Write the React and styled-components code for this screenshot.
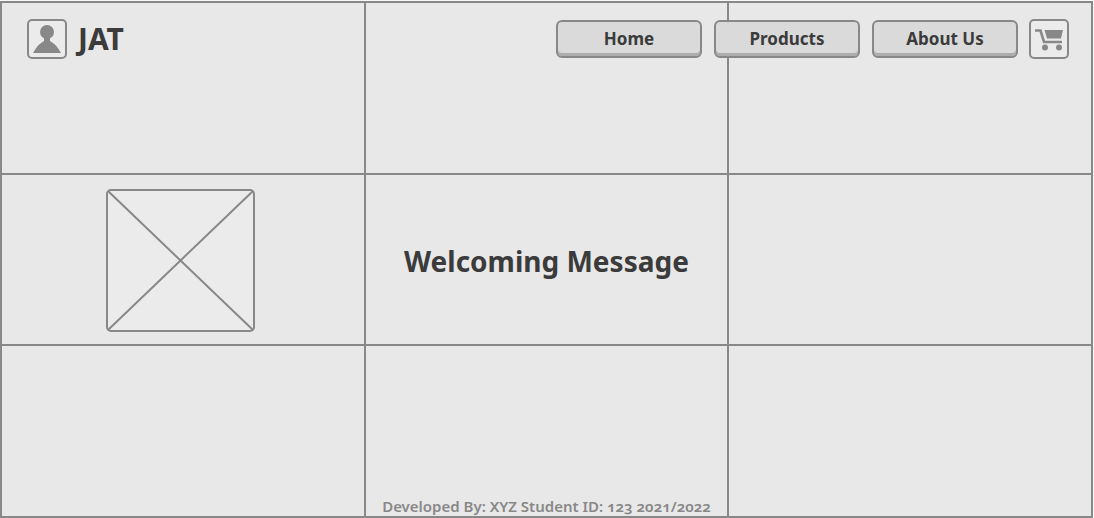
import React from 'react';
import styled, { createGlobalStyle } from 'styled-components';

const line = '#888888';
const surface = '#e8e8e8';
const ink = '#3b3b3b';

const GlobalStyle = createGlobalStyle`
  * { box-sizing: border-box; }
  body {
    margin: 0;
    background: #f8faf9;
    color: ${ink};
    font-family: 'Noto Sans', 'Open Sans', sans-serif;
  }
`;

const Page = styled.div`
  display: flex;
  min-height: 100vh;
  padding: 1px 1px 0 0;
`;

const Frame = styled.div`
  flex: 1;
  display: grid;
  grid-template-columns: repeat(3, minmax(0, 1fr));
  grid-template-rows: repeat(3, minmax(0, 1fr));
  gap: 2px;
  border: 2px solid ${line};
  background: ${line};
`;

const Cell = styled.div`
  grid-row: ${({ $row }) => $row};
  grid-column: ${({ $column }) => $column};
  display: flex;
  align-items: center;
  justify-content: center;
  background: ${surface};
`;

const PictureCell = styled(Cell)`
  padding: 2px 4px 0 0;
`;

const TitleCell = styled(Cell)`
  padding-top: 4px;
`;

const FooterCell = styled(Cell).attrs({ as: 'footer' })`
  align-items: flex-end;
`;

const Header = styled.header`
  grid-row: 1;
  grid-column: 1 / -1;
  z-index: 1;
  display: flex;
  align-items: flex-start;
  justify-content: space-between;
  padding: 16px 22px 0 25px;
`;

const Group = styled.div`
  display: flex;
  align-items: center;
  gap: 11px;
`;

const BrandName = styled.span`
  font-size: 30px;
  font-weight: 700;
  line-height: 40px;
`;

const Nav = styled.nav`
  display: flex;
  align-items: center;
  gap: 12px;
`;

const NavButton = styled.button`
  width: 146px;
  height: 38px;
  padding: 0;
  border: 2px solid ${line};
  border-radius: 6px;
  background: #dadada;
  box-shadow: inset 0 -3px 0 #adadad;
  color: ${ink};
  font-family: inherit;
  font-size: 17px;
  font-weight: 700;
  line-height: 24px;
  cursor: pointer;
`;

const IconButton = styled.button`
  display: grid;
  place-items: center;
  width: 40px;
  height: 40px;
  padding: 0;
  border: 2px solid ${line};
  border-radius: 5px;
  background: #ebebeb;
  color: ${line};
  cursor: pointer;

  svg { display: block; }
`;

const Picture = styled.svg`
  display: block;
  width: 149px;
  height: 143px;
`;

const Title = styled.h1`
  margin: 0;
  font-size: 28px;
  font-weight: 700;
  line-height: 40px;
  white-space: nowrap;
`;

const Credit = styled.p`
  margin: 0;
  color: ${line};
  font-size: 15px;
  font-weight: 600;
  line-height: 20px;
  font-variant-numeric: oldstyle-nums;
  white-space: nowrap;
`;

const UserIcon = () => (
  <svg width="36" height="36" viewBox="0 0 36 36" fill="currentColor" aria-hidden="true">
    <circle cx="18" cy="11" r="7" />
    <path d="M15 15v5c-4 2-8 6-11 12h28c-3-6-7-10-11-12v-5z" />
  </svg>
);

const CartIcon = () => (
  <svg width="36" height="36" viewBox="0 0 36 36" aria-hidden="true">
    <path d="M4 9.500h5.500L13 21h18" fill="none" stroke="currentColor" strokeWidth="2.600" />
    <path d="M13.500 9H32l-2 8.500H16z" fill="currentColor" />
    <circle cx="14" cy="26.500" r="3" fill="currentColor" />
    <circle cx="28" cy="26.500" r="3" fill="currentColor" />
  </svg>
);

export default function App() {
  return (
    <>
      <GlobalStyle />
      <Page>
        <Frame>
          <Header>
            <Group>
              <IconButton type="button" aria-label="Account"><UserIcon /></IconButton>
              <BrandName>JAT</BrandName>
            </Group>
            <Group>
              <Nav>
                <NavButton type="button">Home</NavButton>
                <NavButton type="button">Products</NavButton>
                <NavButton type="button">About Us</NavButton>
              </Nav>
              <IconButton type="button" aria-label="Cart"><CartIcon /></IconButton>
            </Group>
          </Header>
          <Cell $row={1} $column={1} />
          <Cell $row={1} $column={2} />
          <Cell $row={1} $column={3} />
          <PictureCell $row={2} $column={1}>
            <Picture viewBox="0 0 149 143" fill="none" stroke={line} strokeWidth="2" role="img" aria-label="Image placeholder">
              <rect x="1" y="1" width="147" height="141" rx="4" fill="#ebebeb" />
              <path d="M2 2l145 139M147 2L2 141" />
            </Picture>
          </PictureCell>
          <TitleCell $row={2} $column={2}><Title>Welcoming Message</Title></TitleCell>
          <Cell $row={2} $column={3} />
          <Cell $row={3} $column={1} />
          <FooterCell $row={3} $column={2}>
            <Credit>Developed By: XYZ Student ID: 123 2021/2022</Credit>
          </FooterCell>
          <Cell $row={3} $column={3} />
        </Frame>
      </Page>
    </>
  );
}
